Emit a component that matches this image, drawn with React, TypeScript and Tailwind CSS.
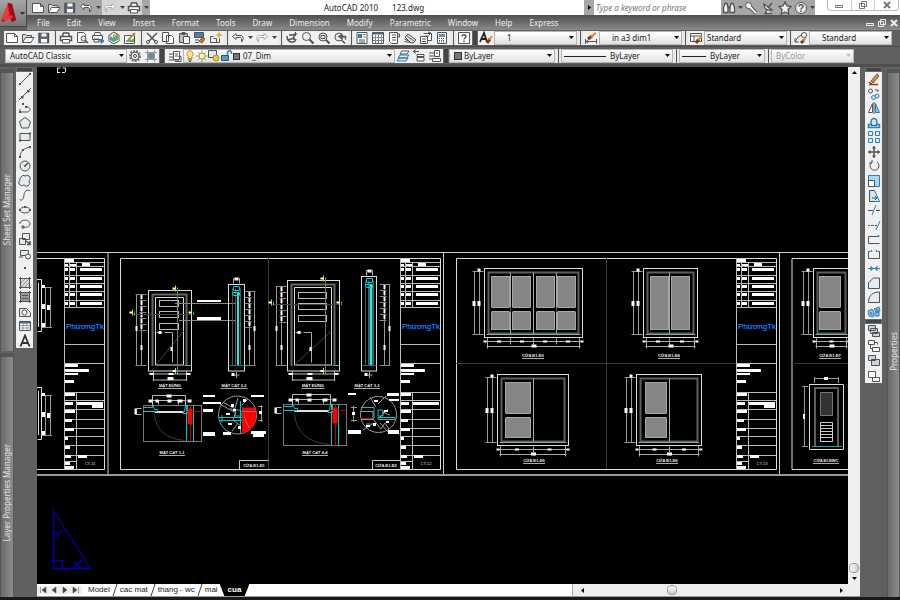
import type { ReactNode } from "react";

const INK = "#505356";
const BLUE = "#2b7fb5";

const icons: Record<string, ReactNode> = {
  new: <path d="M1.5 2.5h8l3 3v6h-11zM9.5 2.5v3h3" fill="#fff" />,
  open: (
    <>
      <path d="M1.5 11.5v-8h3l1 1h5v2" fill="#ddd" />
      <path d="M1.5 11.5l3-5h8.5l-3 5z" fill="#fff" />
    </>
  ),
  save: (
    <>
      <path d="M2 2.5h9.5v9h-9.5z" fill="#5b6b7b" strokeWidth="1.5" />
      <path d="M4.5 2.5h5v3h-5zM4 8h6v3.5h-6z" fill="#fff" stroke="none" />
    </>
  ),
  print: (
    <>
      <path d="M3.5 5l1-3h5l1 3M1.5 5.5h11v4h-11z" fill="#fff" strokeWidth="1.5" />
      <path d="M3.5 8.5h7v3.5h-7z" fill="#fff" />
    </>
  ),
  preview: (
    <>
      <path d="M2.5 1.5h6l2 2v8h-8z" fill="#fff" />
      <circle cx="8.5" cy="7.5" r="2.5" fill="#d5e5f0" />
      <path d="M10.5 9.5l2.5 2.5" strokeWidth="1.5" />
    </>
  ),
  publish: (
    <>
      <path d="M3 4.5l1-3h5l1 3M1.5 4.5h10v4h-10zM3 8h5v3h-5z" fill="#fff" />
      <path d="M7 10h4M10 8l3 2-3 2.5z" stroke={BLUE} fill={BLUE} />
    </>
  ),
  globe: (
    <>
      <path d="M2 4l5-3 5 3v6l-5 3-5-3z" fill="#fff" />
      <path d="M6 4l5-1v6l-5 2z" fill="#58b058" stroke="none" />
      <path d="M3 5l3 2v4l-3-2z" fill="#4b95c9" stroke="none" />
      <path d="M7 2l3 2-3 2z" fill="#e8b838" stroke="none" />
    </>
  ),
  sheet: (
    <>
      <path d="M1.5 4.5h10v8h-10z" fill="#fff" />
      <path d="M3 10l3-3 2 2 3-2v4h-8z" fill="#5da968" stroke="none" />
      <path d="M6 8l6-6" stroke="#c98720" strokeWidth="2" />
    </>
  ),
  cut: (
    <>
      <path d="M2 2l8 8M12 2l-8 8" strokeWidth="1.5" />
      <circle cx="3" cy="11" r="1.5" />
      <circle cx="11" cy="11" r="1.5" />
    </>
  ),
  copy: <path d="M1.5 1.5h6v9h-6zM5.5 4.5h5l2 2v6h-7z" fill="#fff" />,
  paste: (
    <>
      <path d="M2.5 2.5h8v9h-8zM5 1.5h3v2h-3z" fill="#bdbdbd" />
      <path d="M6.5 5.5h6v7h-6z" fill="#fff" />
    </>
  ),
  match: (
    <>
      <path d="M1.5 1.5h9v5h-9z" fill="#4d7fb0" />
      <path d="M2 9h4M2 11.5h4" />
      <path d="M6 10l4-4 2 2-3 4z" fill="#cf7a2a" stroke="#8c4b12" />
    </>
  ),
  block: (
    <>
      <path d="M4.5 5.5h-3v6h9v-4M7.5 11.5v-4h-3" />
      <path d="M10 0l1 3 3 1-3 1-1 3-1-3-3-1 3-1z" fill="#e8a33a" stroke="none" />
    </>
  ),
  undo: <path d="M5 2.5l-3.5 3 3.5 3v-2h4.5q2 .5 1 4.5 3.5-4 0-6.5h-5.5z" fill="#fff" />,
  redo: <path d="M9 2.5l3.5 3-3.5 3v-2h-4.5q-2 .5-1 4.5-3.5-4 0-6.5h5.5z" fill="#fff" stroke="#a9a9a9" />,
  pan: (
    <>
      <path d="M2 5c0 7 8 8 9 3M3 9l6-2M4 4h5v5" strokeWidth="1.5" />
      <path d="M10.5 1v4M8.5 3h4" />
    </>
  ),
  zoom: (
    <>
      <circle cx="5.5" cy="5.5" r="4" fill="#e5eff5" />
      <path d="M8.5 8.5l4 4" strokeWidth="2.2" />
    </>
  ),
  zoomWindow: (
    <>
      <circle cx="6" cy="6" r="4" fill="#e5eff5" />
      <path d="M4 4.5h4v3h-4z" />
      <path d="M9 9l3.5 3.5" strokeWidth="2" />
    </>
  ),
  zoomPrev: (
    <>
      <circle cx="6" cy="6" r="4" fill="#e5eff5" />
      <path d="M8 5.5h4.5v3M8 4l-2 1.5 2 1.5zM9 9.5l3 3" strokeWidth="1.5" />
    </>
  ),
  palette: (
    <>
      <path d="M2 1.5h10v11h-10z" fill="#fff" />
      <path d="M3 3h4v4h-4z" fill={BLUE} stroke="none" />
      <path d="M8.5 3.5h2M8.5 6h2M4 9h6M4 11h6" />
    </>
  ),
  designCenter: (
    <>
      <path d="M1.5 1.5h11v11h-11z" fill="#fff" />
      <path d="M2 2.5h10" stroke="#4e6577" strokeWidth="2" />
      <path d="M4.5 4v8M7.5 4v8M10.5 4v8M2 6.5h10M2 9.5h10" stroke="#7b8790" />
    </>
  ),
  toolPalette: (
    <>
      <path d="M2.5 1.5h8v11h-6l-2-2z" fill="#fff" />
      <path d="M5 4h4M5 6.5h4M5 9h4M10.5 3h2v3h-2" />
    </>
  ),
  sheetSet: <path d="M1.5 10.5l8.5 1.5 3-3-8-6-3 3 5 5M4 5l7 5M1.5 8l4 2" fill="#e4e4e4" />,
  markup: (
    <>
      <path d="M1.5 5.5h7v7h-7zM4.5 2.5h8v7h-4" fill="#fff" />
      <path d="M3 8h4M3 10.5h4M6 5h4M9 1l3 1-2 2" />
    </>
  ),
  calc: (
    <>
      <path d="M2.5 1.5h9v11h-9z" fill="#fff" />
      <path d="M4 3h6v3h-6z" fill="#6a8ba5" stroke="none" />
      <path d="M4 7.5h6M4 9.5h6M4 11h6" strokeDasharray="1 1" />
    </>
  ),
  help: (
    <>
      <path d="M1.5 1.5h11v11h-11z" fill="#fff" />
      <path d="M5 5.5c0-2.5 4-2.5 4 0 0 1.5-2 1.5-2 3M7 9.5v1.5" strokeWidth="1.5" />
    </>
  ),
  textStyle: (
    <>
      <path d="M1 11l4-9 3 9M2.5 8h4.5" stroke="#222" strokeWidth="1.8" />
      <path d="M8 12l3-4" stroke="#7a3a10" strokeWidth="3" />
      <path d="M10 9l3-4" stroke="#d88c3b" strokeWidth="2" />
    </>
  ),
  dimStyle: (
    <>
      <path d="M1.5 8v5M12.5 8v5M2 10.5h10M4 9l-2 1.5 2 1.5" />
      <path d="M4 8l4-3" stroke="#7a3a10" strokeWidth="3" />
      <path d="M7 6l5-4" stroke="#d88c3b" strokeWidth="2" />
    </>
  ),
  tableStyle: (
    <>
      <path d="M1.5 2.5h11v8h-11zM1.5 5h11M5 5v5" fill="#fff" />
      <path d="M7 12l3-4" stroke="#7a3a10" strokeWidth="3" />
      <path d="M9 9l4-4" stroke="#d88c3b" strokeWidth="2" />
    </>
  ),
  leaderStyle: (
    <>
      <path d="M1 11l3-5 5-3M1 7v4h4" />
      <circle cx="10" cy="4" r="2.5" fill="#fff" />
      <path d="M7 12l3-3" stroke="#7a3a10" strokeWidth="3" />
      <path d="M9 10l3-4" stroke="#d88c3b" strokeWidth="2" />
    </>
  ),
  gear: (
    <>
      <circle cx="7" cy="7" r="5" fill="#eee" stroke="#777" strokeDasharray="2 1" strokeWidth="2" />
      <circle cx="7" cy="7" r="4" fill="#eee" />
      <circle cx="7" cy="7" r="1.5" />
    </>
  ),
  workspace: (
    <>
      <path d="M1 3.5h12M1 10.5h12M3.5 1v12M10.5 1v12" stroke="#8c99a3" />
      <path d="M4 4h6v6h-6z" fill="#72828f" stroke="#8c99a3" />
    </>
  ),
  layers: (
    <>
      <path d="M5.5 2.5h6v8h-6z" fill="#fff" />
      <path d="M7 5h3M7 7h3M1 5h4M1 8h4M1 11h10M10.5 7.5h2.5v5h-6" />
    </>
  ),
  bulb: (
    <>
      <path d="M7 1.5a3.5 3.5 0 0 1 2 6v2h-4v-2a3.5 3.5 0 0 1 2-6z" fill="#ffe680" stroke="#b99a2c" />
      <path d="M5 11h4M6 12.5h2" />
    </>
  ),
  sun: (
    <>
      <path d="M7 1v12M1 7h12M3 3l8 8M11 3l-8 8" stroke="#a39a6b" />
      <circle cx="7" cy="7" r="3" fill="#fff3a0" stroke="#a8974b" />
    </>
  ),
  viewport: (
    <>
      <path d="M1.5 1.5h8v7h-8z" fill="#dfe8ee" />
      <circle cx="9" cy="9" r="3" fill="#ecc34b" stroke="#b38a26" />
    </>
  ),
  lock: (
    <>
      <path d="M8.5 6v-3q2-3 4 0v2" stroke={BLUE} strokeWidth="1.5" />
      <path d="M2.5 6.5h7v5h-7z" fill="#4d9ec4" stroke="#2a5975" />
    </>
  ),
  layerCurrent: (
    <>
      <path d="M1 12l2-3h9l-2 3zM2 9l2-3h9l-2 3z" fill="#d5e9f5" stroke={BLUE} />
      <path d="M4 5l2-3h7l-2 3z" fill="#fff" />
    </>
  ),
  layerPrev: <path d="M5 5.5h7v2h-7zM5 8.5h7v3.5h-7zM7 2.5h-5M4 .5l-3 2 3 2" fill="#fff" />,
  layerState: <path d="M6.5 1.5h5v6h-5zM1 4h5M1 7h5M4.5 9.5h8v3h-8zM1 10h3M8 4h2" fill="#fff" />,
  line: (
    <>
      <path d="M2 12l10-10" />
      <path d="M1 11h2v2h-2zM11 1h2v2h-2z" fill={INK} stroke="none" />
    </>
  ),
  xline: (
    <>
      <path d="M1 13l12-12" />
      <path d="M3 9h2.5v2.5h-2.5zM9 3h2.5v2.5h-2.5z" fill={INK} stroke="none" />
    </>
  ),
  pline: (
    <>
      <path d="M2 11h7c4 0 4-5 0-5h-1M2 11v-3" />
      <path d="M1 10h2v2h-2zM7 5h2v2h-2zM4 2h2v2h-2z" fill={INK} stroke="none" />
    </>
  ),
  polygon: <path d="M7 1.5l5.5 4-2 6.5h-7l-2-6.5z" fill="#e4ebef" />,
  rect: (
    <>
      <path d="M2 3.5h10v7h-10z" fill="#e4ebef" />
      <path d="M1 9.5h2v2h-2zM11 2.5h2v2h-2z" fill={INK} stroke="none" />
    </>
  ),
  arc: (
    <>
      <path d="M2 12c0-6 5-9 10-10" />
      <path d="M1 11h2v2h-2zM4 4h2v2h-2zM11 1h2v2h-2z" fill={INK} stroke="none" />
    </>
  ),
  circle: (
    <>
      <circle cx="7" cy="7" r="5" fill="#e4ebef" />
      <path d="M7 7l3-3M6 7h2" strokeWidth="1.5" />
    </>
  ),
  cloud: <path d="M3 3q2-3 4-1 3-2 5 1 1 2-1 4 2 3-1 5-2 1-4-1-3 2-5-1-1-2 1-4-1-1 1-3z" fill="#e4ebef" />,
  spline: <path d="M1.5 11c2 3 4 0 4.5-4s3-6 6.5-4" />,
  ellipse: (
    <>
      <ellipse cx="7" cy="7" rx="5" ry="3" fill="#e4ebef" />
      <path d="M1 6h2v2h-2zM11 6h2v2h-2zM6 3h2v2h-2z" fill={INK} stroke="none" />
    </>
  ),
  ellipseArc: <path d="M1 6h2M2 6c1-4 10-4 10 1 0 3-4 4-7 3M4 9h2v2h-2z" />,
  insert: (
    <>
      <path d="M4.5 1.5h7v6h-7zM1.5 6.5h6v6h-6z" fill="#e4ebef" />
      <path d="M8 9l4 3v-3M12 12.5h-3" strokeWidth="1.5" />
    </>
  ),
  makeBlock: (
    <>
      <path d="M2.5 3.5h8v5h-8zM1 10h4" fill="#e4ebef" />
      <circle cx="10" cy="9.5" r="2.5" fill="#fff" />
    </>
  ),
  point: <path d="M6 6h2v2h-2z" fill={INK} stroke="none" />,
  hatch: (
    <>
      <path d="M2.5 2.5h9v9h-9z" fill="#d5d5d5" />
      <path d="M3 7l4-4M3 11l8-8M7 11l4-4" stroke="#999" />
      <path d="M1 2.5h12M1 11.5h12M2.5 1v12M11.5 1v12" />
    </>
  ),
  gradient: (
    <>
      <path d="M2.5 2.5h9v9h-9z" fill="#999" />
      <path d="M1 2.5h12M1 11.5h12M2.5 1v12M11.5 1v12M4 5.5h6M4 8.5h6" />
    </>
  ),
  region: (
    <>
      <path d="M1.5 3.5h7l4 4v4h-11z" fill="#e4ebef" />
      <circle cx="6.5" cy="7.5" r="2.5" fill="#fff" />
    </>
  ),
  table: (
    <>
      <path d="M1.5 2.5h11v9h-11z" fill="#fff" />
      <path d="M2 3.5h10" stroke="#4e6577" strokeWidth="2" />
      <path d="M5 4v7M9 4v7M2 6.5h10M2 9h10" stroke="#8c99a3" />
    </>
  ),
  mtext: <path d="M2.5 12.5l4.5-11 4.5 11M4 9h6" stroke="#333" strokeWidth="1.8" />,
  erase: (
    <>
      <path d="M4 9l6-7 2 2-6 7z" fill="#d88c3b" stroke="#8c5014" />
      <path d="M2 12.5h9M2 10l3 2" stroke="#913a22" strokeWidth="1.5" />
    </>
  ),
  copyObj: (
    <>
      <circle cx="3.5" cy="4" r="2" />
      <circle cx="6.5" cy="10.5" r="2" stroke={BLUE} fill="#cfe7f5" />
      <circle cx="10" cy="9" r="2" stroke={BLUE} fill="#cfe7f5" />
      <path d="M8 3h3v2" />
    </>
  ),
  mirror: (
    <>
      <path d="M5.5 2.5v9h-4zM7 1v12" fill="#fff" />
      <path d="M8.5 2.5v9h4z" fill="#8cc3e6" stroke={BLUE} />
    </>
  ),
  offset: (
    <>
      <path d="M1.5 11.5v-3h3c-3-8 8-8 5 0h3v3z" fill="#cfe7f5" stroke={BLUE} strokeWidth="1.5" />
      <path d="M4 9.5h6" />
    </>
  ),
  array: <path d="M1.5 1.5h4v4h-4zM8.5 1.5h4v4h-4zM1.5 8.5h4v4h-4zM8.5 8.5h4v4h-4z" stroke={BLUE} fill="#e3f1fa" />,
  move: <path d="M7 1v12M1 7h12M5.5 3h3M5.5 11h3M3 5.5v3M11 5.5v3" strokeWidth="1.5" />,
  rotate: <path d="M5 3a4.5 4.5 0 1 0 5 0M5 1v3h-3" />,
  scale: (
    <>
      <path d="M1.5 1.5h11v11h-11z" fill="#a9d5ef" stroke={BLUE} />
      <path d="M1.5 6.5h6v6h-6z" fill="#fff" />
    </>
  ),
  stretch: (
    <>
      <path d="M2.5 1.5h5l5 11h-10z" fill="#cfe7f5" stroke={BLUE} />
      <path d="M7.5 1.5h-5v11h5M5 9h5M8 7l2 2-2 2" />
    </>
  ),
  trim: (
    <>
      <path d="M1 7.5h5M9 7.5h4" />
      <path d="M5 12l4-10" stroke={BLUE} />
    </>
  ),
  extend: (
    <>
      <path d="M1 7.5h2M4 7.5h3M8 7.5h2" />
      <path d="M9 12l4-9" stroke={BLUE} />
    </>
  ),
  breakPoint: (
    <>
      <path d="M11 4.5h-9.5v7h11" />
      <path d="M11 3.5h1v1h-1z" fill={BLUE} stroke={BLUE} />
    </>
  ),
  break: (
    <>
      <path d="M3 4.5h-1.5v7h11v-7h-1.5" />
      <path d="M4 3.5h1v1h-1zM9 3.5h1v1h-1z" fill={BLUE} stroke={BLUE} />
    </>
  ),
  join: (
    <>
      <path d="M1 7.5h12" stroke={BLUE} />
      <path d="M4 5.5l2 2-2 2zM10 5.5l-2 2 2 2z" fill={BLUE} stroke={BLUE} />
    </>
  ),
  chamfer: <path d="M1.5 12.5v-6l5-4.5h6v10.5z" fill="#e3ecf1" />,
  fillet: <path d="M1.5 12.5c0-7 4-10.5 11-10.5v10.5z" fill="#e3ecf1" />,
  explode: (
    <>
      <path d="M1 6l4-2 2 3-1 5-4-1zM7 4l5-2 1 4-4 1zM8 8l4-1v4h-4z" fill="#8cc3e6" stroke={BLUE} />
      <path d="M4 7v3M10 4v2" />
    </>
  ),
  front: <path d="M1.5 1.5h7v5h-7zM5.5 8.5h7v4h-7zM3.5 4.5h7v5h-7z" fill="#c9d3d9" />,
  back: <path d="M3.5 5.5v4h2M7.5 3.5h3v2M1.5 1.5h6v4h-6zM5.500 8.5h7v4h-7z" fill="#fff" />,
  above: <path d="M1.5 1.5h7v5h-7zM4.5 5.5h8v6h-8z" fill="#c9d3d9" />,
  under: <path d="M1.5 2.5h7v6h-7zM5.5 8.5h7v4h-7z" fill="#fff" />,
  find: (
    <>
      <path d="M3 2.5h2l1 4v5h-4.5v-5zM11 2.5h-2l-1 4v5h4.5v-5z" fill="#eee" strokeWidth="1.3" />
      <path d="M6 6.5h2" strokeWidth="2" />
    </>
  ),
  key: (
    <>
      <path d="M5 5l7 7" strokeWidth="4" />
      <circle cx="4.5" cy="4.5" r="3" fill="#eee" />
      <path d="M5 5l7 7" stroke="#fff" strokeWidth="2" />
    </>
  ),
  dish: <path d="M3 3q0 7 8 6zM7 7l4-5M6 9l-2 3.5h7" fill="#eee" strokeWidth="1.3" />,
  star: <path d="M7 1l2 4 4 .5-3 3 .8 4.5-3.8-2-3.8 2 .8-4.5-3-3 4-.5z" fill="#eee" strokeWidth="1.3" />,
  info: (
    <>
      <circle cx="7" cy="7" r="5.5" fill="#eee" />
      <path d="M5 5.5c0-2.5 4-2.5 4 0 0 1.5-2 1.5-2 3M7 9.5v1.5" strokeWidth="1.5" />
    </>
  )
};

function Icon({ name }: { name: string }) {
  return (
    <svg viewBox="0 0 14 14" className="h-3.5 w-3.5 shrink-0" fill="none" stroke={INK} aria-hidden="true">
      {icons[name]}
    </svg>
  );
}

function Caret({ className = "text-black" }: { className?: string }) {
  return (
    <svg viewBox="0 0 5 3" className={`h-[3px] w-[5px] ${className}`} fill="currentColor" aria-hidden="true">
      <path d="M0 0h5l-2.5 3z" />
    </svg>
  );
}

function Tool({ name }: { name: string }) {
  return (
    <button type="button" aria-label={name} className="flex h-3.5 w-4 shrink-0 items-center justify-center">
      <Icon name={name} />
    </button>
  );
}

function Drop({ label }: { label: string }) {
  return (
    <button type="button" aria-label={label} className="flex h-3.5 w-2 shrink-0 items-center justify-center">
      <Caret className="text-[#444]" />
    </button>
  );
}

function Sep() {
  return (
    <div className="flex h-3.5 w-1.5 shrink-0 justify-center bg-[#e8e8e8]">
      <div className="w-px bg-[#555]" />
    </div>
  );
}

function Grip() {
  return <div className="h-3.5 w-1.5 shrink-0 border-x border-[#6a6a6a] bg-[#444]" />;
}

type ComboProps = {
  label: string;
  value: string;
  width: string;
  pad?: string;
  disabled?: boolean;
  children?: ReactNode;
};

function Combo({ label, value, width, pad = "pl-0.5", disabled = false, children }: ComboProps) {
  return (
    <div
      className={`relative flex h-3.5 shrink-0 items-center border border-[#b4b4b4] bg-gradient-to-b from-white to-[#e2e2e2] ${width}`}
    >
      {children}
      <select
        aria-label={label}
        disabled={disabled}
        className={`h-3 min-w-0 flex-1 appearance-none bg-transparent text-[8px] leading-3 text-[#222] disabled:text-[#999] disabled:opacity-100 ${pad}`}
      >
        <option>{value}</option>
      </select>
      <Caret className={`pointer-events-none absolute right-0.5 top-1 ${disabled ? "text-[#bbb]" : "text-black"}`} />
    </div>
  );
}

const menus = [
  "File", "Edit", "View", "Insert", "Format", "Tools", "Draw",
  "Dimension", "Modify", "Parametric", "Window", "Help", "Express"
];

function Header() {
  return (
    <header className="flex h-[30px] shrink-0 bg-[#606060]">
      <button
        type="button"
        aria-label="Application menu"
        className="flex h-[27px] w-[27px] shrink-0 items-center gap-0.5 border-b border-r border-[#444] bg-gradient-to-b from-[#a5a5a5] to-[#777]"
      >
        <svg viewBox="0 0 18 24" className="h-6 w-[18px]" aria-hidden="true">
          <path d="M1 20L8 2l4 1 4 16-4 2-3-4-5 4z" fill="#c8141c" />
          <path d="M8 2l1 12-8 6z" fill="#ef3a3f" />
          <path d="M8 2l4 1 4 16-4 2z" fill="#9d0c14" />
          <path d="M4 16l8-2 1 3-9 3z" fill="#d93a3e" />
        </svg>
        <Caret className="text-[#333]" />
      </button>
      <div className="flex min-w-0 flex-1 flex-col">
        <div className="flex h-[15px] bg-white">
          <div className="flex items-center bg-[#a6a6a6] pl-[3px]">
            <Tool name="new" />
            <Tool name="open" />
            <Tool name="save" />
            <Tool name="undo" />
            <Drop label="Undo list" />
            <div className="flex h-full items-center bg-[#d6d6d6]">
              <Tool name="redo" />
              <Drop label="Redo list" />
              <Tool name="print" />
            </div>
            <Drop label="Customize" />
          </div>
          <h1 className="flex flex-1 items-center justify-center gap-3.5 pl-3.5 text-[8px] text-[#222]">
            <span>AutoCAD 2010</span>
            <span>123.dwg</span>
          </h1>
          <div className="flex w-2.5 items-center justify-center bg-[#a6a6a6]">
            <svg viewBox="0 0 3 5" className="h-[5px] w-[3px]" aria-hidden="true">
              <path d="M0 0l3 2.5-3 2.5z" />
            </svg>
          </div>
          <input
            aria-label="Search"
            placeholder="Type a keyword or phrase"
            className="w-[127px] bg-white pl-0.5 text-[8px] italic placeholder:text-[#777]"
          />
          <div className="flex w-[94px] items-center justify-around bg-[#a6a6a6]">
            <Tool name="find" />
            <Caret className="text-[#444]" />
            <Tool name="key" />
            <Tool name="dish" />
            <Tool name="star" />
            <Tool name="info" />
            <Caret className="text-[#444]" />
          </div>
          <div className="ml-3 mr-px flex h-[11px] w-[72px] rounded-b border border-t-0 border-[#bbb]">
            <WindowButtons className="border-r border-[#ccc] last:border-0" color="#777" />
          </div>
        </div>
        <div className="flex h-[15px] items-center justify-between bg-gradient-to-b from-[#505050] to-[#8a8a8a]">
          <nav className="flex gap-[17px] pl-2.5 text-[8px] leading-3 text-[#eee]">
            {menus.map((menu) => (
              <button key={menu} type="button">
                {menu}
              </button>
            ))}
          </nav>
          <div className="flex h-3 w-9">
            <WindowButtons className="" color="#eee" />
          </div>
        </div>
      </div>
    </header>
  );
}

function WindowButtons({ className, color }: { className: string; color: string }) {
  const shapes = [
    ["Minimize", "M1.5 5.5h7v2h-7z"],
    ["Restore", "M3.5 1.5h5v5h-5zM1.5 3.5h5v5h-5z"],
    ["Close", "M2 2l6 6M8 2l-6 6"]
  ];
  return (
    <>
      {shapes.map(([label, d]) => (
        <button key={label} type="button" aria-label={label} className={`flex flex-1 items-center justify-center ${className}`}>
          <svg viewBox="0 0 10 10" className="h-2.5 w-2.5" fill="none" stroke={color} strokeWidth={label === "Close" ? 2 : 1}>
            <path d={d} />
          </svg>
        </button>
      ))}
    </>
  );
}

const standardTools = [
  ["new", "open", "save"],
  ["print", "preview", "publish", "globe", "sheet"],
  ["cut", "copy", "paste", "match", "block"]
];

function Toolbars() {
  return (
    <div className="shrink-0 bg-[#606060]">
      <div className="flex h-[15px] items-center pl-1">
        <div className="flex bg-[#f0f0f0]">
          {standardTools.map((group) => (
            <div key={group[0]} className="flex">
              {group.map((name) => (
                <Tool key={name} name={name} />
              ))}
              <Sep />
            </div>
          ))}
          <Tool name="undo" />
          <Drop label="Undo steps" />
          <Tool name="redo" />
          <Drop label="Redo steps" />
          <Sep />
          {["pan", "zoom", "zoomWindow", "zoomPrev"].map((name) => (
            <Tool key={name} name={name} />
          ))}
          <Sep />
          {["palette", "designCenter", "toolPalette", "sheetSet", "markup", "calc"].map((name) => (
            <Tool key={name} name={name} />
          ))}
          <Sep />
          <Tool name="help" />
        </div>
        <Grip />
        <div className="flex bg-[#f0f0f0]">
          <Tool name="textStyle" />
          <Combo label="Text style" value="1" width="w-[83px]" pad="pl-3" />
          <Sep />
          <Tool name="dimStyle" />
          <Combo label="Dimension style" value="in a3 dim1" width="w-[83px]" pad="pl-3" />
          <Sep />
          <Tool name="tableStyle" />
          <Combo label="Table style" value="Standard" width="w-[83px]" />
          <Sep />
          <Tool name="leaderStyle" />
          <Combo label="Multileader style" value="Standard" width="w-[83px]" pad="pl-3" />
        </div>
      </div>
      <div className="my-px h-px bg-[#4a4a4a]" />
      <div className="flex h-4 items-center pl-[5px]">
        <div className="flex bg-[#f0f0f0]">
          <Combo label="Workspace" value="AutoCAD Classic" width="w-[122px]" pad="pl-1" />
          <Tool name="gear" />
          <Tool name="workspace" />
        </div>
        <Grip />
        <div className="flex bg-[#f0f0f0] pl-0.5">
          <Tool name="layers" />
          <Combo label="Layer" value="07_Dim" width="w-[212px]" pad="pl-[3px]">
            <div className="flex items-center">
              {["bulb", "sun", "viewport", "lock"].map((name) => (
                <div key={name} className="flex w-3 justify-center">
                  <Icon name={name} />
                </div>
              ))}
              <div className="ml-px h-[7px] w-[7px] border border-[#333] bg-[#777]" />
            </div>
          </Combo>
          <Tool name="layerCurrent" />
          <Tool name="layerPrev" />
          <Tool name="layerState" />
        </div>
        <Grip />
        <div className="flex bg-[#f0f0f0]">
          <Combo label="Color" value="ByLayer" width="w-[106px]">
            <div className="ml-1 h-2 w-2 border border-[#333] bg-[#777]" />
          </Combo>
          <Sep />
          <Combo label="Linetype" value="ByLayer" width="w-[112px]" pad="pl-1">
            <div className="ml-0.5 h-px w-[42px] bg-[#222]" />
          </Combo>
          <Sep />
          <Combo label="Lineweight" value="ByLayer" width="w-[86px]" pad="pl-1">
            <div className="ml-0.5 h-px w-6 bg-[#222]" />
          </Combo>
          <Sep />
          <Combo label="Plot style" value="ByColor" width="w-[83px]" pad="pl-1" disabled />
        </div>
      </div>
      <div className="h-[3px] bg-[#4f4f4f]" />
    </div>
  );
}

function Palette({ title, className }: { title: string; className: string }) {
  return (
    <section
      className={`flex items-center justify-center border-x border-t-4 border-[#555] bg-gradient-to-r from-[#6a6a6a] to-[#8c8c8c] ${className}`}
    >
      <h2 className="rotate-180 whitespace-nowrap text-[8px] leading-3 text-[#e4e4e4] [writing-mode:vertical-rl]">{title}</h2>
    </section>
  );
}

function ToolColumn({ names, height }: { names: string[]; height: string }) {
  return (
    <div className="w-[17px] shrink-0">
      <div className="h-[5px] border border-[#6a6a6a] bg-[#444]" />
      <div className={`flex flex-col items-center justify-between bg-[#f0f0f0] ${height}`}>
        {names.map((name) => (
          <Tool key={name} name={name} />
        ))}
      </div>
    </div>
  );
}

const drawTools = [
  "line", "xline", "pline", "polygon", "rect", "arc", "circle", "cloud", "spline", "ellipse",
  "ellipseArc", "insert", "makeBlock", "point", "hatch", "gradient", "region", "table", "mtext"
];

const modifyTools = [
  "erase", "copyObj", "mirror", "offset", "array", "move", "rotate", "scale", "stretch",
  "trim", "extend", "breakPoint", "break", "join", "chamfer", "fillet", "explode"
];

type Box = [x: number, y: number, w: number, h: number];

function Bars({ boxes }: { boxes: Box[] }) {
  return (
    <g fill="#fff" stroke="none">
      {boxes.map(([x, y, w, h]) => (
        <rect key={`${x} ${y}`} x={x} y={y} width={w} height={h} />
      ))}
    </g>
  );
}

function Caption({ x, y, w, text, bare = false }: { x: number; y: number; w: number; text: string; bare?: boolean }) {
  return (
    <g>
      <text x={x} y={y} fontSize="4" fontWeight="bold" textAnchor="middle" fill="#eee" stroke="none">
        {text}
      </text>
      {!bare && <path d={`M${x - w / 2} ${y + 1.5}h${w}`} stroke="#aaa" />}
    </g>
  );
}

function TitleBlock({ x, sheet, second = true }: { x: number; sheet: string; second?: boolean }) {
  const rows = [269, 278, 286, 294, 303];
  const marks = [[394, 10], [403, 8], [411, 10], [420, 7], [429, 9], [438, 3], [447, 5], [456, 6], [463, 5], [467, 9]];
  return (
    <g transform={`translate(${x} 0)`}>
      <path
        d="M.5 258v212M0 262.5h40M0 266.5h40M0 275.5h40M0 283.5h40M0 291.5h40M0 300.5h40M0 307.5h40M5.5 262v45M12.5 262v45M0 344.5h40M0 363.5h40M0 392.5h40M12.5 392v78M0 400.5h40M0 409.5h40M0 419.5h40M0 428.5h40M0 436.5h40M0 445.5h40M0 455.5h40M0 461.5h12"
        stroke="#bbb"
      />
      <Bars
        boxes={[
          [1, 259, 9, 3], [1, 264, 3, 2], [6, 264, 6, 2], [18, 263, 8, 3],
          [1, 364, 13, 3], [1, 369, 24, 3], [1, 373, 13, 2], [1, 380, 9, 3],
          [13, 402, 26, 3], [14, 455, 9, 3]
        ]}
      />
      <Bars boxes={rows.flatMap((y): Box[] => [[1, y - 1, 3, 3], [6, y - 1, 5, 3], [16, y - 1, 22, 3]])} />
      <Bars boxes={marks.map(([y, w]): Box => [1, y - 1, w, 3])} />
      {second && <Bars boxes={[[28, 405, 11, 3]]} />}
      <text x="21" y="329" fontSize="8" textAnchor="middle" fill="#1482ff" stroke="#1482ff" strokeWidth=".2">
        PhươngTk
      </text>
      <text x="26" y="465" fontSize="4" textAnchor="middle" fill="#ddd" stroke="none">
        {sheet}
      </text>
    </g>
  );
}

// Chain of dimensions down one side of a door; dir points away from the door.
function DoorDims({ x, top, dir }: { x: number; top: number; dir: number }) {
  const far = x + 5 * dir;
  const ticks = [0, 1, 2, 3, 4, 5, 6].map((i) => top + i * 6);
  return (
    <g>
      <path d={`M${x} ${top}V366M${far} ${top}V366`} stroke="#999" />
      <path d={ticks.map((y) => `M${x + 2 * dir} ${y + 0.5}H${x - 5 * dir}`).join("")} stroke="#888" />
      <path d={`M${far + dir} ${top + 0.5}H${x - 5 * dir}M${far + dir} 365.5H${x - 5 * dir}`} stroke="#888" />
      <Bars boxes={ticks.slice(0, 6).map((y): Box => [x - 1, y + 1, 2, 4])} />
      <Bars boxes={[[x - 1, 345, 2, 5], [far - 1, 326, 2, 5]]} />
    </g>
  );
}

function SectionMark({ x, y }: { x: number; y: number }) {
  return (
    <g>
      <path d={`M${x} ${y - 3}v6`} stroke="#e8d000" />
      <path d={`M${x + 2} ${y - 1}v4`} stroke="#00d060" />
      <path d={`M${x - 3} ${y}h3`} stroke="#fff" strokeWidth="2" />
    </g>
  );
}

function DoorFront({ x, y, w, panes }: { x: number; y: number; w: number; panes: number[] }) {
  const right = x + w;
  return (
    <g>
      <rect x={x} y={y} width={w} height={371 - y} stroke="#ddd" />
      <path d={`M${x + 4} 366V${y + 4}H${right - 5}V366`} stroke="#666" strokeWidth="2" />
      <path d={`M${x + 7} 365V${y + 7}H${right - 8}V365z`} stroke="#ddd" />
      {panes.map((pane) => (
        <rect key={pane} x={x + 11} y={pane} width={w - 24} height="6" stroke="#bbb" />
      ))}
      <path d={`M${x + 8} 364L${right - 8} 331M${x - 16} ${y + 24}H${right}`} stroke="#444" />
      <path d={`M${x + 8} 332.5h6M${x + 16} 332.5h8v30`} stroke="#aaa" />
      <path d={`M${right - 14} ${y - 3}V372`} stroke="#777" />
      <path d={`M${right - 7} 365.5h7`} stroke="#00c8c8" />
      <Bars boxes={[[x + 22, 347, 2, 4], [x + 10, 331, 3, 3]]} />
      <SectionMark x={right - 16} y={y - 2} />
      <SectionMark x={right - 16} y={371} />
      <SectionMark x={x - 16} y={y + 22} />
      <SectionMark x={right} y={y + 22} />
      <path
        d={`M${x + 1} 374h${w - 2}M${x + 5} 380h${w - 10}M${x + 5} 371v10M${right - 5} 371v10`}
        stroke="#bbb"
      />
      <Bars boxes={[[x + 1, 373, 4, 2], [x + 20, 373, 5, 2], [right - 5, 373, 4, 2], [x + 19, 377, 6, 3]]} />
    </g>
  );
}

function DoorSection({ x, y, w, thick }: { x: number; y: number; w: number; thick: number }) {
  return (
    <g>
      <rect x={x} y={y} width={w} height={371 - y} stroke="#ddd" />
      <path d={`M${x + 4} ${y + 4}V366M${x + 7} ${y + 4}V366M${x + 12} ${y + 4}V366`} stroke="#555" />
      <path d={`M${x + 9.5} ${y + 8}V366`} stroke="#28e4e4" strokeWidth={thick} />
      <path d={`M${x} 365.5h${w}`} stroke="#008080" />
      <path d={`M${x + 5} ${y + 2}h6v4h-6zM${x + 4} ${y + 8}h7v3h-6z`} stroke="#00d0d0" />
      <path d={`M${x + 5} ${y - 1}v-5h6v5M${x + 5} 375h6M${x + 8} 372v6`} stroke="#aaa" />
      <Bars boxes={[[x + 6, y - 7, 4, 3], [x + 3, 373, 3, 3]]} />
    </g>
  );
}

function DoorPlan({ x, y, w, h }: { x: number; y: number; w: number; h: number }) {
  const right = x + w;
  return (
    <g>
      <rect x={x} y={y} width={w} height={h} stroke="#777" />
      <path d={`M${x + 11} ${y + 9}Q${x + 13} ${y + h - 4} ${right - 17} ${y + h - 1}`} stroke="#3d3d3d" />
      <path d={`M${x + 11} ${y + 6.5}H${right - 18}`} stroke="#e8d8e8" strokeWidth="2" />
      <path
        d={`M${x} ${y + 2}h9v-3l2 5h3v2h-14M${right - 19} ${y + 6}h2l1-6h2v8h-5M${right - 15} ${y}v${h}M${right - 8} ${y}v${h}`}
        stroke="#00c8c8"
      />
      <path d={`M${right - 11} ${y}v${h}M${right - 16} ${y + 6}H${right}`} stroke="#b00000" />
      <rect x={right - 14} y={y + 3} width="5" height="16" fill="#f00" stroke="none" />
      <path
        d={`M${x + 9} ${y - 10}H${right - 16}M${x + 8} ${y - 5}H${right - 15}M${x + 9} ${y - 10}v10M${x + 15} ${y - 5}v4M${right - 23} ${y - 5}v4M${right - 16} ${y - 10}v10M${x - 2} ${y + 3}h-5v6h5`}
        stroke="#bbb"
      />
      <Bars
        boxes={[
          [x + 23, y - 11, 5, 3], [x + 5, y - 6, 4, 3], [x + 12, y - 6, 3, 3], [x + 24, y - 6, 4, 3],
          [right - 24, y - 6, 5, 3], [right - 14, y - 6, 4, 3], [x - 9, y + 3, 2, 6]
        ]}
      />
    </g>
  );
}

type Pane = [x: number, w: number];

type WindowUnitProps = {
  x: number;
  y: number;
  w: number;
  h: number;
  panes: Pane[];
  bar?: number;
  mullions: number[];
};

function WindowUnit({ x, y, w, h, panes, bar, mullions }: WindowUnitProps) {
  const right = x + w;
  const bottom = y + h;
  const stops = [x + 3, ...mullions, right - 3];
  return (
    <g>
      <rect x={x} y={y} width={w} height={h} stroke="#ddd" />
      <rect x={x + 4} y={y + 4} width={w - 8} height={h - 8} stroke="#5e5e5e" strokeWidth="2" />
      <path d={mullions.map((m) => `M${m} ${y + 4}V${bottom - 4}`).join("")} stroke="#aaa" />
      <path d={`M${x + 2} ${bottom - 3}h${w - 4}`} stroke="#8aa" />
      {panes.map(([px, pw]) => (
        <g key={px}>
          <rect x={px} y={y + 8} width={pw} height={h - 16} fill="#858585" stroke="#a5a5a5" />
          {bar && (
            <>
              <rect x={px - 1} y={bar - 0.5} width={pw + 2} height="5" fill="#000" stroke="none" />
              <path d={`M${px} ${bar}h${pw}M${px} ${bar + 4}h${pw}`} stroke="#aaa" />
            </>
          )}
        </g>
      ))}
      <path
        d={`M${x - 10} ${y + 3}V${bottom - 3}M${x - 5} ${y + 3}V${bottom - 3}M${x - 12} ${y + 3}H${x - 1}M${x - 12} ${bottom - 3}H${x - 1}`}
        stroke="#999"
      />
      <path
        d={`M${x + 1} ${bottom + 4}H${right - 1}M${x + 2} ${bottom + 9}H${right - 2}${stops
          .map((s) => `M${s} ${bottom + 1}v6`)
          .join("")}M${x + 3} ${bottom + 1}v10M${right - 3} ${bottom + 1}v10`}
        stroke="#aaa"
      />
      <Bars
        boxes={[
          [x - 12, y + h / 2 - 2, 3, 5], [x - 7, y + h / 2 - 2, 3, 5], [x - 7, y, 3, 3],
          [x - 1, bottom + 3, 3, 2], [right - 2, bottom + 3, 3, 2], [x + w / 2 - 2, bottom + 7, 5, 3]
        ]}
      />
      <Bars boxes={stops.slice(1).map((s, i): Box => [(s + stops[i]) / 2 - 2, bottom + 3, 4, 2])} />
    </g>
  );
}

function PartialUnit({ y }: { y: number }) {
  return (
    <g stroke="#999">
      <path d={`M37 ${y}.5h4.5v52h-4M38.5 ${y + 4}v44`} stroke="#ddd" />
      <path d={`M42 ${y + 8}.5h10M42 ${y + 48}.5h10M45.5 ${y + 8}v40M50.5 ${y + 8}v40`} />
      <Bars boxes={[[42, y + 6, 3, 3], [42, y + 25, 3, 5], [47, y + 26, 3, 5], [42, y + 44, 3, 4]]} />
    </g>
  );
}

function Drawing() {
  return (
    <svg
      viewBox="37 67 811 517"
      preserveAspectRatio="xMinYMin slice"
      className="min-h-0 min-w-0 flex-1 bg-black"
      fill="none"
      stroke="#ccc"
      fontFamily="'Liberation Sans', sans-serif"
      role="img"
      aria-label="Door and window sheets"
    >
      <path d="M57.5 72v-4h3M65.5 72v-4h-3M57 72.5h3M65 72.5h-3" stroke="#ddd" />
      <path d="M37 252.5h811" />
      <path d="M37 475h811" stroke="#999" strokeWidth="2" />
      <path d="M108 252v222M443.5 252v222M779.5 252v222" />
      <path d="M37 258.5h67.5v211h-67.5M120.5 258.5h320v211h-320zM456.5 258.5h320v211h-320zM848 258.5h-56v211h56" stroke="#ddd" />
      <path d="M268.5 258v211M606.5 258v211M456 363.5h280M792 363.5h56" stroke="#3a3a3a" />

      <TitleBlock x={64} sheet="CT-11" />
      <TitleBlock x={400} sheet="CT-12" second={false} />
      <TitleBlock x={736} sheet="CT-13" />
      <PartialUnit y={279} />
      <PartialUnit y={387} />

      <DoorDims x={141.5} top={294} dir={-1} />
      <DoorFront x={148.5} y={290.5} w={43} panes={[300.5, 311.5, 323.5]} />
      <path d="M175 303.5h60M179 320.5h56" stroke="#888" />
      <Bars boxes={[[197, 300, 24, 2], [197, 317, 24, 3]]} />
      <DoorSection x={228.5} y={284.5} w={16} thick={2} />
      <DoorDims x={249.5} top={291} dir={1} />
      <Caption x={170} y={387} w={24} text="MẶT ĐỨNG" />
      <Caption x={234} y={387} w={27} text="MẶT CẮT 2-2" />

      <DoorDims x={281.5} top={286} dir={-1} />
      <DoorFront x={287.5} y={280.5} w={52} panes={[292.5, 303.5, 315.5]} />
      <DoorSection x={361.5} y={276.5} w={15} thick={3} />
      <DoorDims x={384.5} top={284} dir={1} />
      <Caption x={313} y={387} w={23} text="MẶT ĐỨNG" />
      <Caption x={367} y={387} w={26} text="MẶT CẮT 3-3" />

      <DoorPlan x={143.5} y={405.5} w={58} h={36} />
      <DoorPlan x={283.5} y={404.5} w={63} h={41} />
      <Caption x={172} y={454} w={26} text="MẶT CẮT 1-1" />
      <Caption x={315} y={454} w={26} text="MẶT CẮT 4-4" />

      <circle cx="237.5" cy="415" r="19" stroke="#999" />
      <path d="M242 407.5h13a19 19 0 0 1-13 26z" fill="#f00" stroke="none" />
      <path d="M242 411.5h14M244 416l5 12" stroke="#a66" />
      <path d="M218 417.5h24M220 420.5h22M240.5 401v32M235 410h6v6h-6zM222 415v8" stroke="#00c8c8" />
      <path d="M220 404l14 8 4-14M230 408l6 4-3 8 8 6M232 431l6-8M248 399l-6 6M258 406.5h5M258 420.5h5M261.5 405v17M223 402l12 7" stroke="#999" />
      <Bars
        boxes={[
          [203, 395, 12, 2], [203, 402, 18, 2], [203, 409, 10, 3], [251, 395, 13, 2], [251, 431, 15, 3],
          [253, 434, 11, 3], [203, 432, 12, 4], [223, 432, 8, 3], [226, 413, 4, 2], [233, 409, 3, 2],
          [231, 404, 3, 3], [228, 423, 4, 2], [238, 426, 3, 3], [243, 399, 3, 3], [259, 411, 3, 3]
        ]}
      />

      <circle cx="378.5" cy="414.5" r="18" stroke="#999" />
      <path d="M361 407.5h13v11M378 410h5v6h-5zM378 417.5h17v2h-17zM366 424h10" stroke="#00c8c8" />
      <path d="M361 418.5h13" stroke="#d00" />
      <path d="M361 411.5h12v8h-12M370 397l6 10M386 396l-8 8M388 409l-8 8M382 412l8 3M363 430l9-6M388 432l-8-9M351 407.5h6M351 420.5h6M353.5 406v16M373 419l8 10 4-6 4 6" stroke="#999" />
      <Bars
        boxes={[
          [348, 393, 8, 2], [387, 393, 12, 3], [389, 399, 10, 2], [348, 430, 13, 4], [388, 430, 11, 4],
          [366, 425, 4, 2], [373, 423, 3, 3], [384, 410, 4, 2], [374, 400, 4, 2], [386, 421, 3, 2], [352, 412, 3, 3]
        ]}
      />
      <path d="M239.5 469v-8.5h29M372.5 469v-8.5h28" />
      <Caption x={254} y={467} w={20} text="CỬA Đ1-Đ1" bare />
      <Caption x={386} y={467} w={20} text="CỬA Đ1-Đ2" bare />

      <WindowUnit
        x={484.5} y={268.5} w={98} h={69} bar={307.5}
        panes={[[491.5, 18], [512.5, 18], [536.5, 18], [557.5, 18]]}
        mullions={[510.5, 533.5, 556.5]}
      />
      <WindowUnit x={643.5} y={268.5} w={54} h={69} panes={[[650.5, 18], [671.5, 18]]} mullions={[669.5]} />
      <WindowUnit x={497.5} y={374.5} w={71} h={71} bar={413.5} panes={[[505.5, 25]]} mullions={[533.5]} />
      <WindowUnit x={636.5} y={374.5} w={65} h={71} bar={413.5} panes={[[645.5, 21]]} mullions={[669.5]} />
      <WindowUnit x={813.5} y={268.5} w={36} h={69} bar={307.5} panes={[[819.5, 21]]} mullions={[]} />
      <Caption x={533} y={357} w={22} text="CỬA Đ1-Đ3" />
      <Caption x={669} y={357} w={22} text="CỬA Đ1-Đ4" />
      <Caption x={534} y={462} w={22} text="CỬA Đ1-Đ5" />
      <Caption x={667} y={462} w={22} text="CỬA Đ1-Đ6" />
      <Caption x={830} y={357} w={22} text="CỬA Đ1-Đ7" />
      <Caption x={826} y={462} w={26} text="CỬA ĐI-ĐWC" />

      <path d="M809.5 384.5h34v65h-34z" stroke="#ddd" />
      <path d="M804.5 387v60M802 386.5h6M802 446.5h6M814 378.5h24M814.5 377v6M838.5 377v6" stroke="#999" />
      <path d="M815 447v-59h23v59" stroke="#5e5e5e" strokeWidth="2" />
      <path d="M812 446.5h30" stroke="#399" />
      <path d="M820.5 392.5h12v23h-12z" fill="#333" stroke="#777" />
      <path d="M820.5 422.5h12v19h-12zM821 425.5h11M821 428.5h11M821 431.5h11M821 434.5h11M821 437.5h11" />
      <Bars boxes={[[803, 414, 2, 5], [824, 377, 4, 3]]} />

      <path d="M53.5 511v57.5h37zM53.5 560.5h9v8M55 531l3 4v4M62 530l-4 5M73 561l8 7M82 560l-9 8" stroke="#0000b4" strokeWidth="1.3" />
    </svg>
  );
}

const navArrows = [
  ["First layout", "M1.5 1v6M7 1v6l-4-3z"],
  ["Previous layout", "M6 1v6l-4-3z"],
  ["Next layout", "M2 1v6l4-3z"],
  ["Last layout", "M6.5 1v6M1 1v6l4-3z"]
];

function Slash() {
  return (
    <svg viewBox="0 0 6 12" className="h-3 w-1.5 shrink-0" stroke="#444" aria-hidden="true">
      <path d="M1 12l4-12" />
    </svg>
  );
}

function LayoutTabs() {
  return (
    <div className="flex h-3 items-center bg-white font-['Liberation_Sans',sans-serif] text-[8px] leading-3 text-[#222]">
      <div className="flex w-[45px] items-center justify-around bg-[#eee]">
        {navArrows.map(([label, d]) => (
          <button key={label} type="button" aria-label={label}>
            <svg viewBox="0 0 8 8" className="h-2 w-2" fill="#444" stroke="#444" strokeWidth=".5">
              <path d={d} />
            </svg>
          </button>
        ))}
      </div>
      <button type="button" className="pl-1.5 pr-0.5">Model</button>
      <Slash />
      <button type="button" className="px-0.5">cac mat</button>
      <Slash />
      <button type="button" className="px-0.5">thang - wc</button>
      <Slash />
      <button type="button" className="px-0.5">mai</button>
      <button
        type="button"
        className="h-3 bg-black px-2 font-bold text-white [clip-path:polygon(0_0,100%_0,84%_100%,16%_100%)]"
      >
        cua
      </button>
      <div className="flex-1" />
      <div className="flex h-3 w-[288px] items-center justify-between border-l border-[#aaa] bg-[#eee] pl-2 pr-[17px]">
        <svg viewBox="0 0 3 5" className="h-[5px] w-[3px]" aria-hidden="true">
          <path d="M3 0v5l-3-2.5z" />
        </svg>
        <div className="mr-20 h-2.5 w-2.5 rounded-sm border border-[#999] bg-gradient-to-b from-white to-[#ccc]" />
        <svg viewBox="0 0 3 5" className="h-[5px] w-[3px]" aria-hidden="true">
          <path d="M0 0v5l3-2.5z" />
        </svg>
      </div>
    </div>
  );
}

export default function App() {
  return (
    <div className="flex h-screen w-full flex-col overflow-hidden bg-[#606060] font-['Noto_Sans',sans-serif]">
      <Header />
      <Toolbars />
      <main className="flex min-h-0 flex-1">
        <aside className="flex w-3.5 shrink-0 flex-col gap-0.5 pt-0.5">
          <Palette title="Sheet Set Manager" className="h-[282px] pb-1" />
          <Palette title="Layer Properties Manager" className="flex-1 pt-8" />
        </aside>
        <div className="ml-0.5 mr-1">
          <ToolColumn names={drawTools} height="h-[276px]" />
        </div>
        <div className="flex min-w-0 flex-1 flex-col">
          <div className="flex min-h-0 flex-1">
            <Drawing />
            <div className="flex w-3 shrink-0 flex-col items-center justify-between bg-[#f0f0f0] py-1">
              <svg viewBox="0 0 5 3" className="h-[3px] w-[5px]" aria-hidden="true">
                <path d="M0 3h5l-2.5-3z" />
              </svg>
              <div className="mb-1 mt-auto h-2.5 w-2.5 rounded-sm border border-[#999] bg-gradient-to-r from-white to-[#ccc]" />
              <Caret />
            </div>
          </div>
          <LayoutTabs />
          <div className="h-px bg-[#999]" />
        </div>
        <div className="mx-[5px]">
          <ToolColumn names={modifyTools} height="h-[247px]" />
          <ToolColumn names={["front", "back", "above", "under"]} height="h-[59px]" />
        </div>
        <aside className="flex w-[13px] shrink-0 flex-col pt-0.5">
          <Palette title="Properties" className="flex-1 pt-8" />
        </aside>
      </main>
      <footer className="h-[3px] shrink-0 bg-[#1a1a1a]" />
    </div>
  );
}
